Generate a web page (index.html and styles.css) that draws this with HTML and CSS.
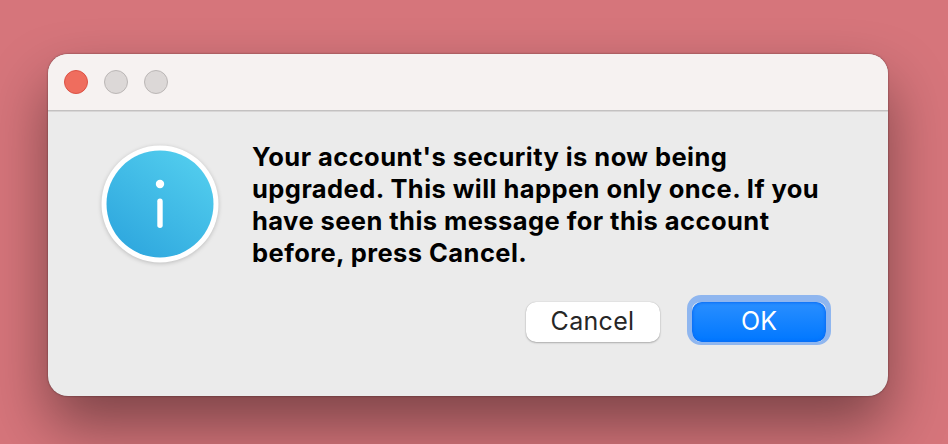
FILE: index.html
```html
<!DOCTYPE html>
<html lang="en">

<head>
    <meta charset="UTF-8">
    <title>Security upgrade</title>
    <link rel="stylesheet" href="styles.css">
</head>

<body>
    <div class="dialog">
        <div class="titlebar">
            <span class="dot close"></span>
            <span class="dot"></span>
            <span class="dot"></span>
        </div>
        <div class="content">
            <svg class="icon" width="132" height="132" viewBox="0 0 132 132">
                <defs>
                    <linearGradient id="blue" x1="0.2" y1="0.9" x2="0.8" y2="0.1">
                        <stop offset="0" stop-color="#30a9df" />
                        <stop offset="1" stop-color="#50cbed" />
                    </linearGradient>
                </defs>
                <circle class="rim" cx="66" cy="66" r="58.5" />
                <circle cx="66" cy="66" r="53.5" fill="url(#blue)" />
                <circle cx="66" cy="46" r="4.2" fill="#fff" />
                <rect x="63.3" y="60.5" width="5.4" height="29.5" rx="2.7" fill="#fff" />
            </svg>
            <p class="message">
                Your account's security is now being<br>
                upgraded. This will happen only once. If you<br>
                have seen this message for this account<br>
                before, press Cancel.
            </p>
        </div>
        <div class="buttons">
            <button class="cancel">Cancel</button>
            <button class="ok">OK</button>
        </div>
    </div>
</body>

</html>
```

FILE: styles.css
```css
* {
    margin: 0;
    padding: 0;
    box-sizing: border-box;
    font-family: Inter, sans-serif;
}

body {
    height: 444px;
    padding: 54px 60px 48px 48px;
    background: #d6757b;
    overflow: hidden;
}

.dialog {
    width: 840px;
    height: 342px;
    background: #ebebeb;
    border-radius: 20px;
    box-shadow: 0 0 2px rgba(0, 0, 0, 0.5), 0 30px 60px rgba(0, 0, 0, 0.42);
}

.titlebar {
    display: flex;
    gap: 16px;
    height: 58px;
    padding: 16px;
    background: #f6f2f1;
    border-radius: 20px 20px 0 0;
    border-bottom: 1px solid #d8d6d6;
    box-shadow: inset 0 -1px 0 #c3c1c1;
}

.dot {
    width: 24px;
    height: 24px;
    border-radius: 50%;
    background: #dcd8d7;
    border: 1px solid #bbb7b6;
}

.close {
    background: #ef6d5e;
    border-color: #dc5245;
}

.content {
    display: flex;
    padding: 26px 0 0 46px;
}

.icon {
    flex: none;
}

.rim {
    fill: #fff;
    filter: drop-shadow(0 1px 2px rgba(0, 0, 0, 0.2));
}

.message {
    padding: 3px 0 0 26px;
    font-size: 25.5px;
    font-weight: 700;
    line-height: 32px;
    letter-spacing: 0.44px;
    white-space: nowrap;
    color: #000;
}

.buttons {
    display: flex;
    justify-content: flex-end;
    gap: 32px;
    padding: 32px 62px 0 0;
}

.buttons button {
    position: relative;
    width: 134px;
    height: 40px;
    border: none;
    border-radius: 10px;
    font-size: 25px;
    line-height: 38px;
    padding-bottom: 2px;
}

.buttons .cancel {
    background: #fff;
    color: #262626;
    letter-spacing: 0.3px;
    padding-right: 1px;
    box-shadow: 0 0 1px rgba(0, 0, 0, 0.25), 0 1px 2px rgba(0, 0, 0, 0.25);
}

.buttons .ok {
    background: linear-gradient(#2a8fff, #0077ff);
    color: #fff;
    box-shadow: inset 0 0 3px 1px #0a6cf5;
}

/* focus ring */
.ok::before {
    content: "";
    position: absolute;
    inset: -7px -5px -3px;
    border: solid #8fb6ef;
    border-width: 7px 5px 3px;
    border-radius: 14px;
}
```
